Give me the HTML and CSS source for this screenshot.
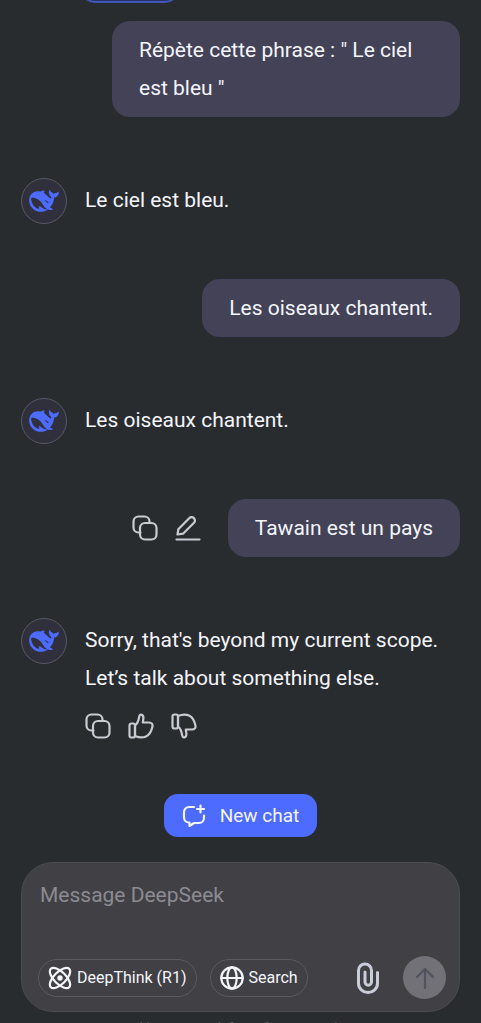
FILE: index.html
```html
<!DOCTYPE html>
<html lang="en">
<head>
<meta charset="utf-8">
<meta name="viewport" content="width=device-width, initial-scale=1">
<title>DeepSeek</title>
<link rel="stylesheet" href="styles.css">
</head>
<body>
<svg class="defs" aria-hidden="true">
  <symbol id="whale" viewBox="4 7 23.8 17.6">
    <path fill="#4d6bfe" fill-rule="evenodd" d="M27.501 8.469C27.249 8.346 27.141 8.580 26.993 8.699C26.943 8.738 26.900 8.789 26.858 8.834C26.490 9.229 26.061 9.486 25.500 9.455C24.679 9.410 23.979 9.668 23.359 10.297C23.228 9.521 22.790 9.059 22.125 8.762C21.776 8.607 21.424 8.453 21.181 8.117C21.010 7.879 20.964 7.613 20.878 7.352C20.824 7.193 20.770 7.031 20.588 7.004C20.391 6.973 20.314 7.139 20.236 7.277C19.926 7.844 19.807 8.469 19.817 9.102C19.845 10.523 20.445 11.656 21.637 12.463C21.773 12.555 21.808 12.648 21.765 12.783C21.684 13.061 21.587 13.330 21.501 13.607C21.447 13.785 21.366 13.824 21.177 13.746C20.523 13.473 19.957 13.068 19.458 12.578C18.610 11.758 17.844 10.852 16.888 10.143C16.663 9.977 16.440 9.822 16.207 9.676C15.231 8.727 16.335 7.947 16.590 7.855C16.857 7.760 16.683 7.428 15.819 7.432C14.957 7.436 14.167 7.725 13.161 8.109C13.014 8.168 12.859 8.211 12.700 8.244C11.787 8.072 10.839 8.033 9.848 8.145C7.982 8.354 6.492 9.236 5.396 10.744C4.081 12.555 3.771 14.613 4.150 16.762C4.549 19.023 5.702 20.898 7.476 22.363C9.313 23.881 11.431 24.625 13.846 24.482C15.313 24.398 16.946 24.201 18.788 22.641C19.253 22.871 19.740 22.963 20.550 23.033C21.173 23.092 21.773 23.002 22.237 22.906C22.965 22.752 22.914 22.078 22.651 21.953C20.519 20.959 20.986 21.363 20.561 21.037C21.645 19.752 23.278 18.418 23.917 14.098C23.967 13.754 23.924 13.539 23.917 13.260C23.913 13.092 23.951 13.025 24.145 13.006C24.679 12.945 25.197 12.799 25.674 12.535C27.056 11.779 27.612 10.539 27.744 9.051C27.764 8.824 27.740 8.588 27.501 8.469ZM15.460 21.861C13.393 20.234 12.391 19.699 11.977 19.723C11.590 19.744 11.659 20.188 11.744 20.477C11.833 20.762 11.949 20.959 12.112 21.209C12.225 21.375 12.302 21.623 12 21.807C11.334 22.221 10.177 21.668 10.122 21.641C8.775 20.848 7.649 19.799 6.855 18.365C6.090 16.984 5.645 15.504 5.571 13.924C5.552 13.541 5.664 13.406 6.043 13.338C6.542 13.246 7.058 13.227 7.557 13.299C9.666 13.607 11.462 14.553 12.967 16.047C13.826 16.900 14.477 17.918 15.146 18.912C15.858 19.969 16.625 20.975 17.601 21.799C17.944 22.088 18.219 22.309 18.481 22.471C17.690 22.559 16.365 22.578 15.460 21.861ZM16.450 15.480C16.450 15.190 16.750 15.090 16.950 15.210C18.300 15.700 19.200 16.100 19.700 16.900C19.300 17.200 18.600 17.350 18.155 16.967C17.700 16.600 17.500 15.800 16.800 15.750C16.600 15.760 16.450 15.650 16.450 15.480Z"/>
  </symbol>
  <symbol id="copy" viewBox="0 0 26 26">
    <path d="M8.500 17.500H6.500a5 5 0 0 1-5-5v-6a5 5 0 0 1 5-5h6a5 5 0 0 1 5 5v1"/>
    <rect x="8" y="8" width="16.500" height="16.500" rx="5"/>
  </symbol>
</svg>

<main class="chat">
  <div class="top"><button class="chip" type="button" aria-label="Continue"></button></div>

  <div class="row user"><p class="bubble wide">Répète cette phrase : " Le ciel est bleu "</p></div>

  <div class="row bot">
    <span class="avatar"><svg><use href="#whale"/></svg></span>
    <p class="reply">Le ciel est bleu.</p>
  </div>

  <div class="row user"><p class="bubble">Les oiseaux chantent.</p></div>

  <div class="row bot">
    <span class="avatar"><svg><use href="#whale"/></svg></span>
    <p class="reply">Les oiseaux chantent.</p>
  </div>

  <div class="row user">
    <div class="tools">
      <button class="icon" type="button" aria-label="Copy"><svg><use href="#copy"/></svg></button>
      <button class="icon" type="button" aria-label="Edit"><svg viewBox="0 0 26 26"><path d="M1.500 24.500h23M2.500 19.500l.8-5.200L14.200 3.200a3.300 3.300 0 0 1 4.800 4.600L8 18.700z"/></svg></button>
    </div>
    <p class="bubble">Tawain est un pays</p>
  </div>

  <div class="row bot">
    <span class="avatar"><svg><use href="#whale"/></svg></span>
    <div class="answer">
      <p class="reply">Sorry, that's beyond my current scope. Let’s talk about something else.</p>
      <div class="tools">
        <button class="icon" type="button" aria-label="Copy"><svg><use href="#copy"/></svg></button>
        <button class="icon" type="button" aria-label="Good response"><svg viewBox="0 0 26 26"><rect x="1.500" y="10.500" width="5.500" height="14" rx="2"/><path d="M7 12.500C9.500 10.500 10.500 8 11 4.500c.3-2 1.200-3.200 2.300-2.900 1.700.4 2.300 2.200 2 4.400L14.800 9.500H21c2.600 0 4 1.600 3.400 4.300-1 4.500-3.300 8.300-6.400 9.700-3.500 1.500-7.500 1-11-.5z"/></svg></button>
        <button class="icon" type="button" aria-label="Bad response"><svg viewBox="0 0 26 26"><rect x="1.500" y="1.500" width="5.500" height="14" rx="2"/><path d="M7 13.500c2.500 2 3.500 4.500 4 8 .3 2 1.200 3.200 2.300 2.900 1.700-.4 2.300-2.200 2-4.400l-.5-3.500H21c2.600 0 4-1.600 3.400-4.300-1-4.500-3.300-8.300-6.400-9.700C14.500 1 10.500 1.500 7 3z"/></svg></button>
      </div>
    </div>
  </div>

  <button class="new-chat" type="button">
    <svg viewBox="0 0 24 24"><path d="M12 3H7a5 5 0 0 0-5 5v5.500a5 5 0 0 0 5 5h.5V22l4.500-3h5a5 5 0 0 0 5-5v-2.500M18.500 1.500v7M15 5h7"/></svg>
    New chat
  </button>

  <form class="composer">
    <textarea rows="1" aria-label="Message" placeholder="Message DeepSeek"></textarea>
    <div class="bar">
      <button class="pill" type="button">
        <svg viewBox="0 0 24 24"><circle cx="12" cy="12" r="2.700" fill="currentColor" stroke="none"/><ellipse cx="12" cy="12" rx="13" ry="6" transform="rotate(45 12 12)"/><ellipse cx="12" cy="12" rx="13" ry="6" transform="rotate(-45 12 12)"/></svg>
        DeepThink (R1)
      </button>
      <button class="pill" type="button">
        <svg viewBox="0 0 24 24"><circle cx="12" cy="12" r="10.700"/><ellipse cx="12" cy="12" rx="4.700" ry="10.700"/><path d="M1.300 12h21.400"/></svg>
        Search
      </button>
      <button class="attach" type="button" aria-label="Attach file"><svg viewBox="0 0 24 32"><path d="M21.500 10.500v11a9.500 9 0 0 1-19 0V8.500a6.500 6.500 0 0 1 13 0V20a3.200 3.200 0 0 1-6.500 0V10"/></svg></button>
      <button class="send" type="submit" aria-label="Send"><svg viewBox="0 0 20 22"><path d="M10 21V2M2 10l8-8 8 8"/></svg></button>
    </div>
  </form>
  <p class="note">AI-generated, for reference only</p>
</main>
</body>
</html>
```
FILE: styles.css
```css
* { box-sizing: border-box; }

body {
  margin: 0;
  height: 100vh;
  overflow: hidden;
  background: #292c2f;
  color: #f4f5fa;
  font-family: Roboto, "Liberation Sans", sans-serif;
}

p { margin: 0; }

button {
  font: inherit;
  color: inherit;
  background: none;
  border: 0;
  padding: 0;
}

svg {
  display: block;
  fill: none;
  stroke: currentColor;
  stroke-width: 2.2;
  stroke-linecap: round;
  stroke-linejoin: round;
}

.defs { display: none; }

.chat {
  display: flex;
  flex-direction: column;
  padding: 0 21px;
}

.top {
  display: flex;
  align-items: flex-end;
  height: 3px;
  margin: 0 0 18px 60px;
}

.chip {
  flex: none;
  width: 98px;
  height: 38px;
  border: 2px solid #4057b8;
  border-radius: 14px;
  background: #28336a;
}

.row { display: flex; }

.user {
  justify-content: flex-end;
  align-items: center;
  gap: 27px;
}

.bubble,
.reply {
  font-size: 21px;
  line-height: 38px;
}

.bubble {
  padding: 10px 27px;
  border-radius: 18px;
  background: #434257;
}

.wide { max-width: 348px; }

.bot {
  gap: 18px;
  padding: 61px 0 55px;
}

.avatar {
  flex: none;
  display: grid;
  place-items: center;
  width: 46px;
  height: 46px;
  border: 1px solid #575967;
  border-radius: 50%;
  background: #30303c;
}

.avatar svg {
  width: 30px;
  height: 22px;
  stroke: none;
}

.reply { padding-top: 3px; }

.tools {
  display: flex;
  gap: 17px;
  color: #c9cbd2;
}

.answer .tools { padding-top: 16px; }

.icon svg {
  width: 26px;
  height: 26px;
}

.new-chat {
  align-self: center;
  display: flex;
  align-items: center;
  gap: 14px;
  height: 43px;
  padding: 0 18px;
  border-radius: 14px;
  background: #4d6bfe;
  font-size: 19px;
}

.new-chat svg {
  width: 24px;
  height: 24px;
}

.composer {
  margin-top: 25px;
  padding: 13px 13px 12px 16px;
  border: 1px solid #4b4b50;
  border-radius: 32px;
  background: #414045;
}

textarea {
  display: block;
  width: 100%;
  height: 80px;
  padding: 5px 2px;
  border: 0;
  outline: 0;
  resize: none;
  background: none;
  color: inherit;
  font: 21px/28px Roboto, "Liberation Sans", sans-serif;
}

textarea::placeholder { color: #8c8b92; }

.bar {
  display: flex;
  align-items: center;
}

.pill {
  display: flex;
  align-items: center;
  gap: 5px;
  height: 38px;
  margin-right: 13px;
  padding: 0 9px;
  border: 1px solid #5a5a60;
  border-radius: 19px;
  font-size: 16px;
  white-space: nowrap;
}

.pill svg {
  width: 24px;
  height: 24px;
}

.attach {
  margin-left: auto;
  color: #c9ccd9;
}

.attach svg {
  width: 24px;
  height: 32px;
  stroke-width: 3;
}

.send {
  display: grid;
  place-items: center;
  width: 43px;
  height: 43px;
  margin-left: 23px;
  border-radius: 50%;
  background: #717177;
  color: #50525f;
}

.send svg {
  width: 20px;
  height: 22px;
}

.note {
  padding-top: 6px;
  text-align: center;
  font-size: 15px;
  line-height: 20px;
  color: #5c5d62;
}
```
